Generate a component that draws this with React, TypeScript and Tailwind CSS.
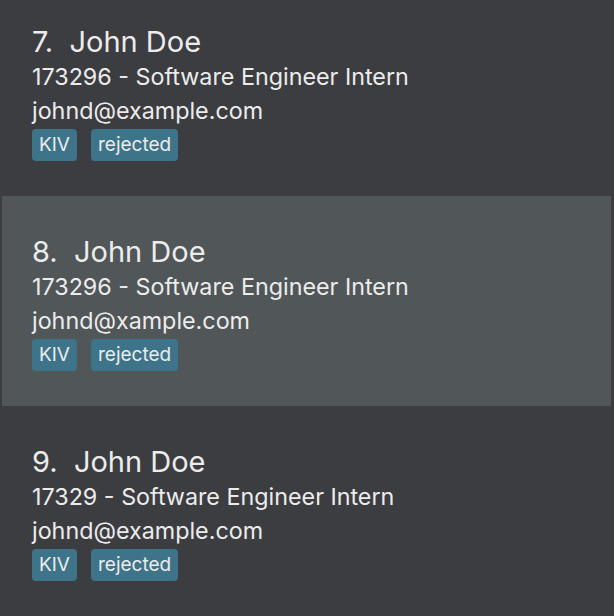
import React from 'react';

interface Applicant {
  index: number;
  name: string;
  role: string;
  email: string;
  tags: string[];
}

const applicants: Applicant[] = [
  { index: 7, name: 'John Doe', role: '173296 - Software Engineer Intern', email: 'johnd@example.com', tags: ['KIV', 'rejected'] },
  { index: 8, name: 'John Doe', role: '173296 - Software Engineer Intern', email: 'johnd@xample.com', tags: ['KIV', 'rejected'] },
  { index: 9, name: 'John Doe', role: '17329 - Software Engineer Intern', email: 'johnd@example.com', tags: ['KIV', 'rejected'] },
];

const ApplicantCard: React.FC<{ applicant: Applicant; selected?: boolean }> = ({ applicant, selected }) => (
  <div
    className={
      selected
        ? 'h-[210px] ml-[2px] mr-[3px] bg-[#515658] pt-[38px] pl-[30px] pr-4'
        : 'h-[210px] ml-[2px] mr-[3px] pt-[38px] pl-[30px] pr-4'
    }
  >
    <div className="text-[29px] leading-[36px] text-[#ececec]">
      {applicant.index}.&nbsp; {applicant.name}
    </div>
    <div className="text-[23.3px] leading-[34px] text-[#ececec]">{applicant.role}</div>
    <div className="text-[23.3px] leading-[34px] text-[#ececec]">{applicant.email}</div>
    <div className="flex gap-[14px] mt-[1px]">
      {applicant.tags.map((tag) => (
        <span
          key={tag}
          className="h-[32px] px-[7px] rounded-[4px] bg-[#3e7489] text-[19px] leading-[32px] text-[#ececec]"
        >
          {tag}
        </span>
      ))}
    </div>
  </div>
);

export default function App() {
  return (
    <div
      className="w-[614px] h-[616px] overflow-hidden bg-[#3c3d40]"
      style={{ fontFamily: 'Inter, "Noto Sans", sans-serif' }}
    >
      <div className="-mt-[14px]">
        {applicants.map((a) => (
          <ApplicantCard key={a.index} applicant={a} selected={a.index === 8} />
        ))}
      </div>
    </div>
  );
}
